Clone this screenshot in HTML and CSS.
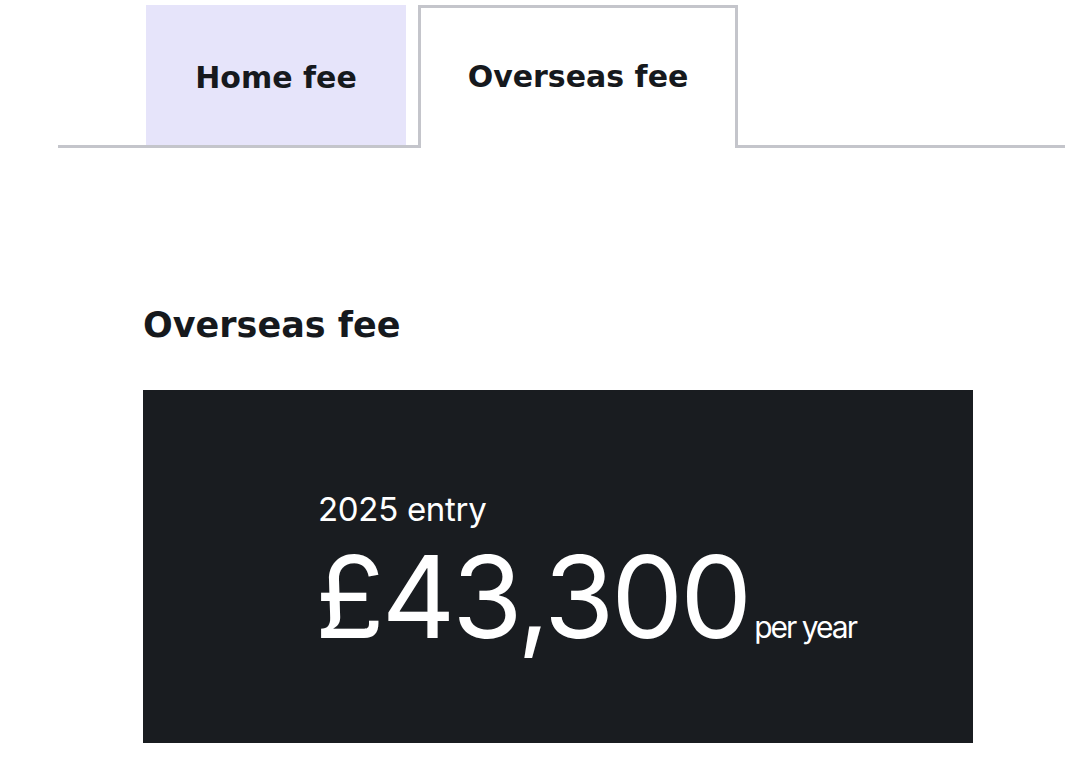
FILE: index.html
```html
<!DOCTYPE html>
<html lang="en">

<head>
    <meta charset="UTF-8">
    <meta name="viewport" content="width=device-width, initial-scale=1.0">
    <title>Fees</title>
    <link rel="stylesheet" href="styles.css">
</head>

<body>
    <div class="tabs">
        <button class="tab">Home fee</button>
        <button class="tab active">Overseas fee</button>
    </div>

    <div class="panel">
        <h2>Overseas fee</h2>
        <div class="fee-box">
            <div class="entry">2025 entry</div>
            <div class="price">
                <span class="amount">£43,300</span>
                <span class="period">per year</span>
            </div>
        </div>
    </div>
</body>

</html>
```

FILE: styles.css
```css
body {
    margin: 0;
    background-color: #fff;
    color: #16191d;
    font-family: Inter, "Liberation Sans", sans-serif;
}

.tabs {
    display: flex;
    align-items: flex-end;
    gap: 12px;
    margin: 5px 15px 0 58px;
    padding-left: 88px;
    border-bottom: 3px solid #c4c5cb;
    height: 140px;
}

.tab {
    font-family: "DejaVu Sans", sans-serif;
    font-size: 30px;
    font-weight: bold;
    color: #16191d;
    border: none;
    background-color: #e6e4fa;
    width: 260px;
    height: 140px;
    padding: 4px 0 0;
    cursor: pointer;
}

.tab.active {
    background-color: #fff;
    width: 320px;
    height: 143px;
    margin-bottom: -3px;
    border: 3px solid #c4c5cb;
    border-bottom: none;
    padding: 0 0 4px;
}

.panel {
    padding: 160px 0 0 143px;
}

h2 {
    font-family: "DejaVu Sans", sans-serif;
    font-size: 35px;
    font-weight: bold;
    margin: 0 0 47px;
    line-height: 1;
}

.fee-box {
    background-color: #191c20;
    color: #fff;
    width: 830px;
    height: 353px;
    box-sizing: border-box;
    padding: 103px 0 0 175px;
}

.entry {
    font-size: 33px;
    letter-spacing: -0.3px;
    line-height: 1;
}

.price {
    display: flex;
    align-items: baseline;
    margin-top: 8px;
}

.amount {
    font-size: 114px;
    font-weight: 400;
    letter-spacing: -3px;
    line-height: 1.1;
    margin-left: -3px;
}

.period {
    font-size: 30px;
    letter-spacing: -2px;
    margin-left: 5px;
}
```
